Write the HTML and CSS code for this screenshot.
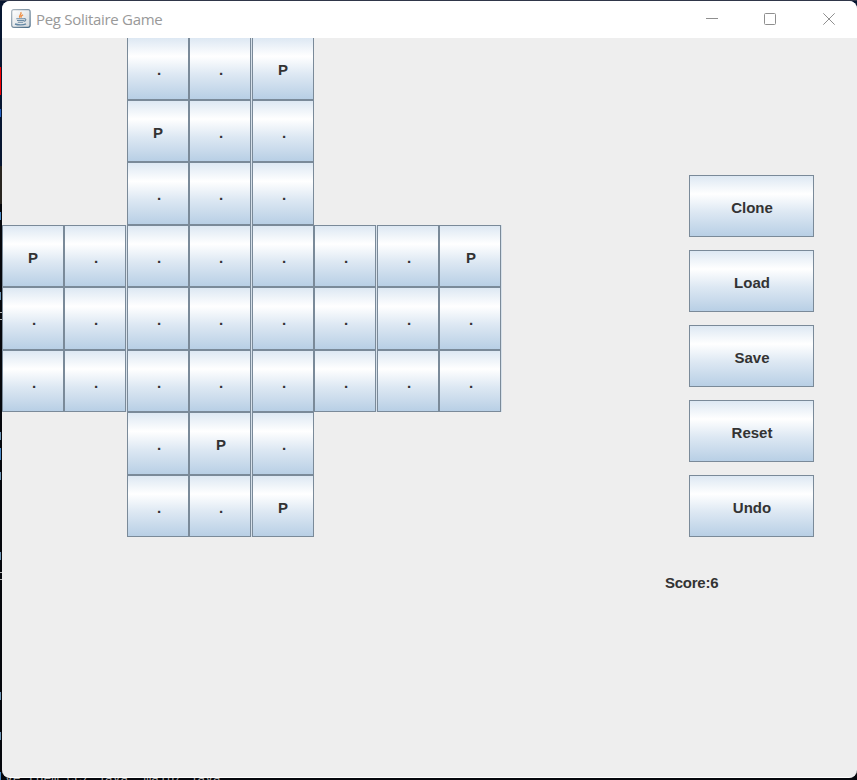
FILE: index.html
```html
<!DOCTYPE html>
<html lang="en">
<head>
<meta charset="utf-8">
<title>Peg Solitaire Game</title>
<link rel="stylesheet" href="styles.css">
</head>
<body>
<div class="desktop">
  <div class="window">
    <header class="titlebar">
      <svg class="app-icon" width="20" height="20" viewBox="0 0 20 20">
        <defs>
          <linearGradient id="tile" x1="0" y1="0" x2="1" y2="1"><stop offset="0" stop-color="#fff"/><stop offset="1" stop-color="#d3d8dc"/></linearGradient>
          <linearGradient id="edge" x1="0" y1="0" x2="1" y2="1"><stop offset="0" stop-color="#a9b4bd"/><stop offset="1" stop-color="#486a86"/></linearGradient>
        </defs>
        <rect x=".7" y=".7" width="18.4" height="17.6" rx="2" fill="url(#tile)" stroke="url(#edge)" stroke-width="1.2"/>
        <path d="M9 8.8C6.8 6.6 11.5 5.6 9.8 3M10.5 8.7c-1.2-1.4.2-2.2 1.6-3" fill="none" stroke="#ee8f45" stroke-width="1.3"/>
        <path d="M5.3 9.7h8M6 11.5h7M6.8 13.3h5.3M13 9.7c2.5-.4 2.5 2-.3 2.8" fill="none" stroke="#6c8ba4" stroke-width="1.1"/>
        <path d="M4 15c3 1.2 8.500 1.200 11-.2" fill="none" stroke="#6488a5" stroke-width="1.4"/>
      </svg>
      <h1 class="title">Peg Solitaire Game</h1>
      <div class="controls">
        <svg class="minimize" width="12" height="12" viewBox="0 0 12 12"><path d="M0 5.500h12"/></svg>
        <svg width="12" height="12" viewBox="0 0 12 12"><rect x=".5" y=".5" width="11" height="11" rx="1"/></svg>
        <svg width="12" height="12" viewBox="0 0 12 12"><path d="M.3.3l11.400 11.400M11.700.3L.3 11.700"/></svg>
      </div>
    </header>
    <main class="content">
      <div class="board" id="board"></div>
      <aside class="panel">
        <div class="actions">
          <button class="metal">Clone</button>
          <button class="metal">Load</button>
          <button class="metal">Save</button>
          <button class="metal">Reset</button>
          <button class="metal">Undo</button>
        </div>
        <div class="score">Score:6</div>
      </aside>
    </main>
  </div>
  <div class="terminal"><span class="terminal-line">ve them cc/ java 'main/ java</span></div>
</div>
<script src="board.js"></script>
</body>
</html>
```
FILE: styles.css
```css
* { box-sizing: border-box; }
body { margin: 0; overflow: hidden; }

.desktop {
  display: flex;
  flex-direction: column;
  width: 857px;
  height: 780px;
  padding: 1px 0 0 2px;
  background:
    linear-gradient(#2f3649, #2f3649) 0 0 / 100% 1px no-repeat,
    linear-gradient(#f20000, #f20000) 0 67px / 1px 28px no-repeat,
    linear-gradient(#2460c0, #2460c0) 0 109px / 1px 8px no-repeat,
    linear-gradient(#4a88c4, #4a88c4) 0 212px / 1px 8px no-repeat,
    linear-gradient(#6d94b4, #6d94b4) 0 292px / 1px 8px no-repeat,
    linear-gradient(#b5b5b5, #b5b5b5) 0 312px / 2px 1px no-repeat,
    linear-gradient(#b5b5b5, #b5b5b5) 0 319px / 2px 1px no-repeat,
    linear-gradient(#6d94b4, #6d94b4) 0 432px / 1px 8px no-repeat,
    linear-gradient(#4a88c4, #4a88c4) 0 448px / 1px 12px no-repeat,
    linear-gradient(#6d94b4, #6d94b4) 0 472px / 1px 8px no-repeat,
    linear-gradient(#6d94b4, #6d94b4) 0 552px / 1px 8px no-repeat,
    linear-gradient(#b5b5b5, #b5b5b5) 0 572px / 2px 1px no-repeat,
    linear-gradient(#b5b5b5, #b5b5b5) 0 579px / 2px 1px no-repeat,
    linear-gradient(#6d94b4, #6d94b4) 0 692px / 1px 8px no-repeat,
    linear-gradient(#6d94b4, #6d94b4) 0 732px / 1px 8px no-repeat,
    linear-gradient(#4a88c4, #4a88c4) 0 772px / 1px 8px no-repeat,
    linear-gradient(#071631 166px, #29251f 166px, #29251f 204px, #05070c 204px);
}

.window {
  display: flex;
  flex-direction: column;
  height: 777px;
  flex: none;
  background: #eee;
  border-bottom: 1px solid #fff;
  border-radius: 8px;
  overflow: hidden;
}

.titlebar {
  display: flex;
  align-items: center;
  flex: none;
  height: 37px;
  padding: 0 22px 0 9px;
  background: #fff;
  z-index: 1;
}
.app-icon { margin-top: -1px; }
.title {
  margin: -1px 0 0 5px;
  font: 400 15px/20px "Open Sans", "Noto Sans", sans-serif;
  letter-spacing: -.3px;
  color: #999;
}
.controls { display: flex; gap: 47px; margin: -1px 0 0 auto; }
.controls svg { fill: none; stroke: #8f8f8f; stroke-width: 1; }
.controls .minimize { margin-right: -1px; }

.content {
  display: flex;
  justify-content: space-between;
  flex: 1;
  min-height: 0;
  font: bold 15px/18px "Liberation Sans", Arial, sans-serif;
  color: #333;
}

.board {
  display: grid;
  grid-template-columns: repeat(4, 62px 63px);
  grid-template-rows: 63px repeat(3, 62px 63px) 62px;
  align-content: start;
  height: 500px;
  margin-top: -1px;
}

.metal {
  display: flex;
  align-items: center;
  justify-content: center;
  padding: 3px 0 0 1px;
  border: 1px solid #7a8a99;
  background: linear-gradient(#dde8f3, #fff 30%, #dde8f3 60%, #b8cfe5);
  font: inherit;
  color: inherit;
}

.cell { width: 62px; padding-left: 0; }
.cell.hole, .cell.wide { padding-left: 2px; }
.cell.wide { box-shadow: 1px 0 0 #d6e0ea; }

.panel { width: 192px; padding-top: 137px; }
.actions { display: grid; gap: 13px; padding-left: 24px; }
.actions .metal { width: 125px; height: 62px; padding-top: 3px; }
.score { margin-top: 37px; letter-spacing: -.25px; }

.terminal { flex: 1; overflow: hidden; padding-left: 3px; }
.terminal-line {
  display: block;
  margin-top: -6px;
  font: 13px/14px "Liberation Mono", monospace;
  letter-spacing: -.1px;
  white-space: pre;
  color: #aaa;
}
```
FILE: board.js
```js
// P marks a peg, a dot marks a hole, a space lies outside the board.
const rows = [
  "  ..P   ",
  "  P..   ",
  "  ...   ",
  "P......P",
  "........",
  "........",
  "  .P.   ",
  "  ..P   "
];
const board = document.getElementById("board");
rows.forEach(row => {
  [...row].forEach((mark, column) => {
    const cell = document.createElement(mark === " " ? "span" : "button");
    if (mark !== " ") {
      cell.className = "metal cell" + (mark === "." ? " hole" : "") + (column % 2 ? " wide" : "");
      cell.textContent = mark;
    }
    board.append(cell);
  });
});
```
